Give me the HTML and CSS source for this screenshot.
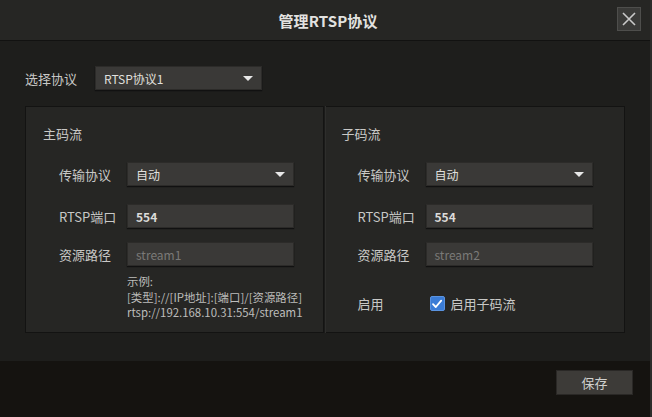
FILE: index.html
```html
<!DOCTYPE html>
<html lang="zh">
<head>
<meta charset="utf-8">
<title>管理RTSP协议</title>
<link rel="stylesheet" href="styles.css">
</head>
<body>
<div class="dialog">
  <div class="header">
    <span></span>
    <div class="title">管理RTSP协议</div>
    <button class="close" aria-label="关闭">
      <svg width="14" height="14" viewBox="0 0 14 14"><path d="M1 1 L13 13 M13 1 L1 13" stroke="#c9c9c9" stroke-width="1.6" fill="none"/></svg>
    </button>
  </div>
  <div class="body">
    <div class="top-row">
      <span class="lbl">选择协议</span>
      <div class="select sel-top"><span>RTSP协议1</span><i class="arrow"></i></div>
    </div>
    <div class="panels">
      <div class="panel left">
        <div class="ptitle">主码流</div>
        <div class="row r1">
          <span class="flabel">传输协议</span>
          <div class="select field"><span>自动</span><i class="arrow"></i></div>
        </div>
        <div class="row r2">
          <span class="flabel">RTSP端口</span>
          <div class="input field val">554</div>
        </div>
        <div class="row r3">
          <span class="flabel">资源路径</span>
          <div class="input field ph">stream1</div>
        </div>
        <div class="example">
          <div>示例:</div>
          <div>[类型]://[IP地址]:[端口]/[资源路径]</div>
          <div>rtsp://192.168.10.31:554/stream1</div>
        </div>
      </div>
      <div class="sep"></div>
      <div class="panel right">
        <div class="ptitle">子码流</div>
        <div class="row r1">
          <span class="flabel">传输协议</span>
          <div class="select field"><span>自动</span><i class="arrow"></i></div>
        </div>
        <div class="row r2">
          <span class="flabel">RTSP端口</span>
          <div class="input field val">554</div>
        </div>
        <div class="row r3">
          <span class="flabel">资源路径</span>
          <div class="input field ph">stream2</div>
        </div>
        <div class="row enable">
          <span class="flabel">启用</span>
          <label class="check">
            <span class="box"><svg width="12" height="12" viewBox="0 0 12 12"><path d="M2 6.2 L4.8 9 L10.2 2.6" stroke="#fff" stroke-width="1.8" fill="none" stroke-linecap="round" stroke-linejoin="round"/></svg></span>
            <span>启用子码流</span>
          </label>
        </div>
      </div>
    </div>
  </div>
  <div class="footer">
    <button class="save">保存</button>
  </div>
</div>
</body>
</html>
```
FILE: styles.css
```css
* { box-sizing: border-box; }
html, body { margin: 0; padding: 0; }
body {
  width: 652px;
  height: 417px;
  overflow: hidden;
  background: #1e1e1c;
  font-family: "Noto Sans CJK SC", "Noto Sans", "Liberation Sans", sans-serif;
  color: #c8c8c6;
  font-size: 13px;
}
.dialog {
  width: 652px;
  height: 417px;
  display: flex;
  flex-direction: column;
  border-right: 2px solid #2c2c2a;
}
.header {
  height: 41px;
  flex: none;
  background: #262624;
  border-bottom: 1px solid #121211;
  display: grid;
  grid-template-columns: 1fr auto 1fr;
  align-items: center;
  padding: 0 9px 0 15px;
}
.title {
  font-size: 15px;
  font-weight: bold;
  color: #e2e2e0;
  letter-spacing: 0.1px;
}
.close {
  justify-self: end;
  width: 24px;
  height: 24px;
  margin-top: -2px;
  padding: 0;
  border: 1px solid #4e4e4c;
  background: #3a3a38;
  display: flex;
  align-items: center;
  justify-content: center;
}
.body {
  flex: 1;
  padding: 25px 25px 0 25px;
  background: #1e1e1c;
}
.top-row {
  display: flex;
  align-items: center;
  height: 24px;
}
.lbl {
  width: 70px;
  color: #c8c8c6;
}
.select, .input {
  height: 24px;
  background: #3a3937;
  border: 1px solid #2c2b29;
  box-shadow: 0 1px 1px #111;
  display: flex;
  align-items: center;
  padding: 0 8px;
  font-size: 12px;
  color: #e0e0de;
}
.sel-top { width: 167px; }
.select { justify-content: space-between; }
.arrow {
  width: 0;
  height: 0;
  border-left: 5px solid transparent;
  border-right: 5px solid transparent;
  border-top: 5px solid #e8e8e8;
}
.panels {
  margin-top: 16px;
  height: 227px;
  display: flex;
}
.panel {
  background: #262624;
  border-top: 1px solid #131312;
  border-bottom: 1px solid #131312;
  padding-top: 17px;
  display: flex;
  flex-direction: column;
}
.panel.left { width: 298px; padding-left: 17px; border-left: 1px solid #131312; }
.panel.right { width: 300px; padding-left: 16px; border-right: 1px solid #131312; }
.sep {
  width: 3px;
  background: #1b1b1a;
  border-left: 1px solid #141413;
  border-right: 1px solid #2e2e2c;
}
.ptitle {
  height: 20px;
  line-height: 20px;
  font-size: 13px;
  color: #c8c8c6;
}
.row {
  display: flex;
  align-items: center;
  padding-left: 16px;
}
.r1 { margin-top: 18px; }
.r2 { margin-top: 18px; }
.r3 { margin-top: 14px; }
.flabel {
  width: 68px;
  flex: none;
  color: #c8c8c6;
}
.field { width: 167px; }
.val { font-weight: bold; color: #dcdcda; }
.ph { color: #7a7a78; }
.example {
  margin-top: 8px;
  padding-left: 84px;
  font-size: 11.4px;
  line-height: 15.5px;
  color: #bdbdbb;
}
.enable { margin-top: 28px; }
.check {
  display: flex;
  align-items: center;
  gap: 6px;
  margin-left: 4px;
  color: #c8c8c6;
}
.box {
  width: 15px;
  height: 15px;
  border-radius: 2px;
  background: #3b7cd6;
  border: 1px solid #5a93e0;
  display: flex;
  align-items: center;
  justify-content: center;
}
.footer {
  height: 56px;
  flex: none;
  background: #151310;
  display: flex;
  justify-content: flex-end;
  align-items: flex-start;
  padding: 9px 17px 0 0;
}
.save {
  width: 77px;
  height: 25px;
  background: #3d3b38;
  border: 1px solid #2a2826;
  color: #d0d0ce;
  font-family: "Noto Sans CJK SC", "Noto Sans", sans-serif;
  font-size: 13px;
  padding: 0;
}
```
